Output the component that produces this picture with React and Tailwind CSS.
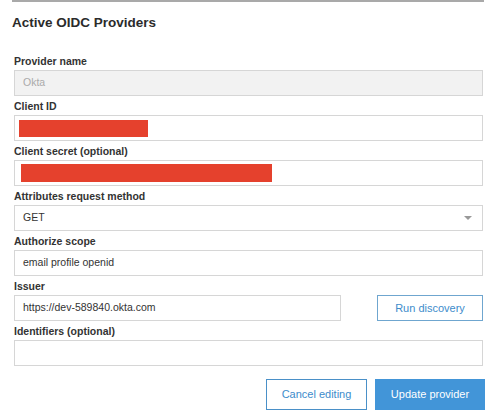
import React from 'react'

const font = { fontFamily: '"Liberation Sans", Arial, Helvetica, sans-serif' }

function Label({ children }) {
  return (
    <div className="pt-[4px] pb-[2px] text-[10.5px] leading-[13px] font-bold text-[#333]">
      {children}
    </div>
  )
}

function Box({ children, className = '', pad = 'pl-[8px]' }) {
  return (
    <div
      className={`h-[26px] border border-[#d6d6d6] flex items-center text-[10.5px] ${pad} ${className}`}
    >
      {children}
    </div>
  )
}

export default function App() {
  return (
    <div className="w-[494px] h-[419px] bg-white overflow-hidden" style={font}>
      <div className="ml-[12px] w-[472px] h-[2px] bg-[#a9a9a9]" />
      <h1 className="ml-[12px] mt-[12px] text-[13.5px] leading-[18px] font-bold text-[#2b2b2b]">
        Active OIDC Providers
      </h1>

      <div className="pl-[14px] pr-[11px] mt-[19px]">
        <Label>Provider name</Label>
        <Box className="bg-[#f2f2f2] text-[#aaa]">Okta</Box>

        <Label>Client ID</Label>
        <Box className="bg-white" pad="pl-[4px]">
          <div className="w-[129px] h-[17px] bg-[#e5412d]" />
        </Box>

        <Label>Client secret (optional)</Label>
        <Box className="bg-white" pad="pl-[6px]">
          <div className="w-[251px] h-[18px] bg-[#e5412d]" />
        </Box>

        <Label>Attributes request method</Label>
        <Box className="bg-white text-[#333] justify-between pr-[10px]">
          <span>GET</span>
          <span className="w-0 h-0 border-l-[4px] border-r-[4px] border-t-[4px] border-l-transparent border-r-transparent border-t-[#999]" />
        </Box>

        <Label>Authorize scope</Label>
        <Box className="bg-white text-[#333]">email profile openid</Box>

        <Label>Issuer</Label>
        <div className="flex items-center justify-between">
          <Box className="w-[327px] bg-white text-[#333]">https://dev-589840.okta.com</Box>
          <button className="w-[106px] h-[26px] border border-[#6fa6cf] text-[11px] text-[#3d8ccb] bg-white">
            Run discovery
          </button>
        </div>

        <Label>Identifiers (optional)</Label>
        <Box className="bg-white" />

        <div className="flex justify-end gap-[8px] mt-[13px] -mr-[2px]">
          <button className="w-[101px] h-[31px] border border-[#4a90c8] text-[11px] text-[#3d8ccb] bg-white">
            Cancel editing
          </button>
          <button className="w-[110px] h-[31px] bg-[#4295d8] text-[11px] text-white">
            Update provider
          </button>
        </div>
      </div>
    </div>
  )
}
